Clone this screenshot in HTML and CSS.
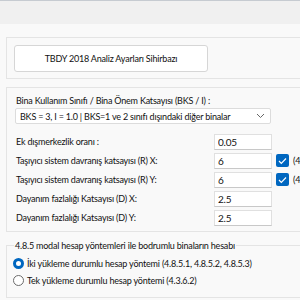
FILE: index.html
```html
<!DOCTYPE html>
<html lang="tr">
<head>
  <meta charset="UTF-8">
  <title>TBDY 2018 Analiz Ayarları</title>
  <link rel="stylesheet" href="styles.css">
</head>
<body>
  <div class="topbar"></div>

  <div class="content">
    <div class="group group-button">
      <button class="wizard">TBDY 2018 Analiz Ayarları Sihirbazı</button>
    </div>

    <div class="group group-params">
      <div class="field-label">Bina Kullanım Sınıfı / Bina Önem Katsayısı (BKS / I) :</div>
      <div class="select">
        <span>BKS = 3, I = 1.0 | BKS=1 ve 2 sınıfı dışındaki diğer binalar</span>
        <svg class="chevron" width="9" height="6" viewBox="0 0 9 6"><path d="M1 1l3.5 3.5L8 1" fill="none" stroke="#666" stroke-width="1"/></svg>
      </div>

      <div class="rows">
        <div class="row">
          <span class="label">Ek dışmerkezlik oranı :</span>
          <input class="num" value="0.05">
        </div>
        <div class="row">
          <span class="label">Taşıyıcı sistem davranış katsayısı (R) X:</span>
          <input class="num" value="6">
          <span class="check"><svg width="9" height="8" viewBox="0 0 9 8"><path d="M1 4l2.3 2.3L8 1.5" fill="none" stroke="#fff" stroke-width="1.2"/></svg></span>
          <span class="note">(4/3)</span>
        </div>
        <div class="row">
          <span class="label">Taşıyıcı sistem davranış katsayısı (R) Y:</span>
          <input class="num" value="6">
          <span class="check"><svg width="9" height="8" viewBox="0 0 9 8"><path d="M1 4l2.3 2.3L8 1.5" fill="none" stroke="#fff" stroke-width="1.2"/></svg></span>
          <span class="note">(4/3)</span>
        </div>
        <div class="row">
          <span class="label">Dayanım fazlalığı Katsayısı (D) X:</span>
          <input class="num" value="2.5">
        </div>
        <div class="row">
          <span class="label">Dayanım fazlalığı Katsayısı (D) Y:</span>
          <input class="num" value="2.5">
        </div>
      </div>
    </div>

    <fieldset class="group-modal">
      <legend>4.8.5 modal hesap yöntemleri ile bodrumlu binaların hesabı</legend>
      <label class="radio"><span class="dot on"></span>İki yükleme durumlu hesap yöntemi (4.8.5.1, 4.8.5.2, 4.8.5.3)</label>
      <label class="radio"><span class="dot"></span>Tek yükleme durumlu hesap yöntemi (4.3.6.2)</label>
    </fieldset>
  </div>
</body>
</html>
```

FILE: styles.css
```css
html, body {
  margin: 0;
  padding: 0;
}

body {
  width: 300px;
  height: 300px;
  overflow: hidden;
  background-color: #f9f9f9;
  border-top: 1px solid #c6cbd1;
  box-sizing: border-box;
  font-family: Lato, "Liberation Sans", sans-serif;
  font-size: 9px;
  letter-spacing: -0.2px;
  color: #111;
}

.topbar {
  height: 23px;
  background-color: #f0f0f0;
}

.content {
  padding: 13px 0 0 6px;
  width: 320px;
}

.group {
  border: 1px solid #e4e4e4;
  background-color: #f9f9f9;
}

.group-button {
  height: 42px;
  box-sizing: border-box;
  padding: 7px 7px;
}

.wizard {
  display: block;
  width: 194px;
  height: 27px;
  background: #fff;
  border: 1px solid #d6d6d6;
  border-radius: 3px;
  font-family: inherit;
  font-size: inherit;
  letter-spacing: inherit;
  color: #111;
  padding: 0;
}

.group-params {
  margin-top: 8px;
  height: 145px;
  box-sizing: border-box;
  padding: 5px 0 0 9px;
}

.field-label {
  line-height: 15px;
}

.select {
  display: flex;
  align-items: center;
  justify-content: space-between;
  width: 256px;
  height: 16px;
  box-sizing: border-box;
  margin: 0 0 0 -1px;
  padding: 0 5px 0 4px;
  background: #fff;
  border: 1px solid #dcdcdc;
  border-radius: 2px;
  white-space: nowrap;
  overflow: hidden;
}

.rows {
  margin-top: 8px;
}

.row {
  display: flex;
  align-items: center;
  height: 19px;
}

.label {
  width: 198px;
  white-space: nowrap;
}

.num {
  width: 58px;
  height: 16px;
  box-sizing: border-box;
  border: 1px solid #e0e0e0;
  border-bottom-color: #c8c8c8;
  background: #fff;
  font-family: inherit;
  font-size: 10px;
  letter-spacing: inherit;
  color: #111;
  padding: 0 3px;
  margin: 0;
}

.check {
  display: inline-flex;
  align-items: center;
  justify-content: center;
  width: 13px;
  height: 13px;
  margin-left: 4px;
  border-radius: 2px;
  background: #0067c0;
}

.note {
  margin-left: 4px;
}

.group-modal {
  margin: 7px 0 0 0;
  padding: 3px 0 8px 6px;
  border: 1px solid #e4e4e4;
}

.group-modal legend {
  padding: 0 1px;
  margin-left: 1px;
  line-height: 13px;
}

.radio {
  display: flex;
  align-items: center;
  height: 17px;
  white-space: nowrap;
}

.dot {
  width: 11px;
  height: 11px;
  box-sizing: border-box;
  margin-right: 3px;
  border: 1px solid #6b6b6b;
  border-radius: 50%;
  background: #fff;
}

.dot.on {
  border: 3px solid #0067c0;
}
```
